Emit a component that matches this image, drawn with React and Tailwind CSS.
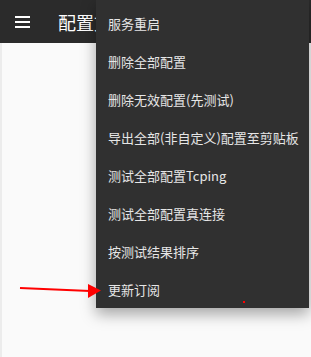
import React from 'react';

const ITEMS = ['服务重启', '删除全部配置', '删除无效配置(先测试)', '导出全部(非自定义)配置至剪贴板', '测试全部配置Tcping', '测试全部配置真连接', '按测试结果排序', '更新订阅'];

const font = { fontFamily: '"Noto Sans CJK SC", "Noto Sans", sans-serif' };

export default function App() {
  return (
    <div className="relative w-[311px] h-[357px] overflow-hidden bg-[#fafafa]" style={font}>
      <div className="h-[43px] bg-[#2b2b2b] flex items-center">
        <div className="ml-[15px] w-[15px] flex flex-col gap-[3px]">
          <div className="h-[2px] bg-white" />
          <div className="h-[2px] bg-white" />
          <div className="h-[2px] bg-white" />
        </div>
        <span className="ml-[28px] text-white text-[18px] leading-none">配置文件</span>
      </div>
      <div className="absolute left-0 top-[43px] bottom-0 w-[2px] bg-[#ececec]" />

      {/* popup menu */}
      <div className="absolute top-0 left-[96px] w-[213px] bg-[#303030] pt-[4px] shadow-[0_6px_14px_rgba(0,0,0,0.35)]">
        {ITEMS.map(t => (
          <div key={t} className="h-[38px] flex items-center pl-[12px] text-[13px] text-[#e6e6e6] leading-none">{t}</div>
        ))}
        <div className="absolute left-[147px] top-[301px] w-[2px] h-[2px] bg-[#ff0000]" />
      </div>

      {/* red arrow */}
      <svg className="absolute left-0 top-0" width="311" height="357">
        <line x1="20" y1="288" x2="90" y2="291" stroke="#ff0000" strokeWidth="2" />
        <polygon points="88,284 101,290.5 88,298" fill="#ff0000" />
      </svg>
    </div>
  );
}
